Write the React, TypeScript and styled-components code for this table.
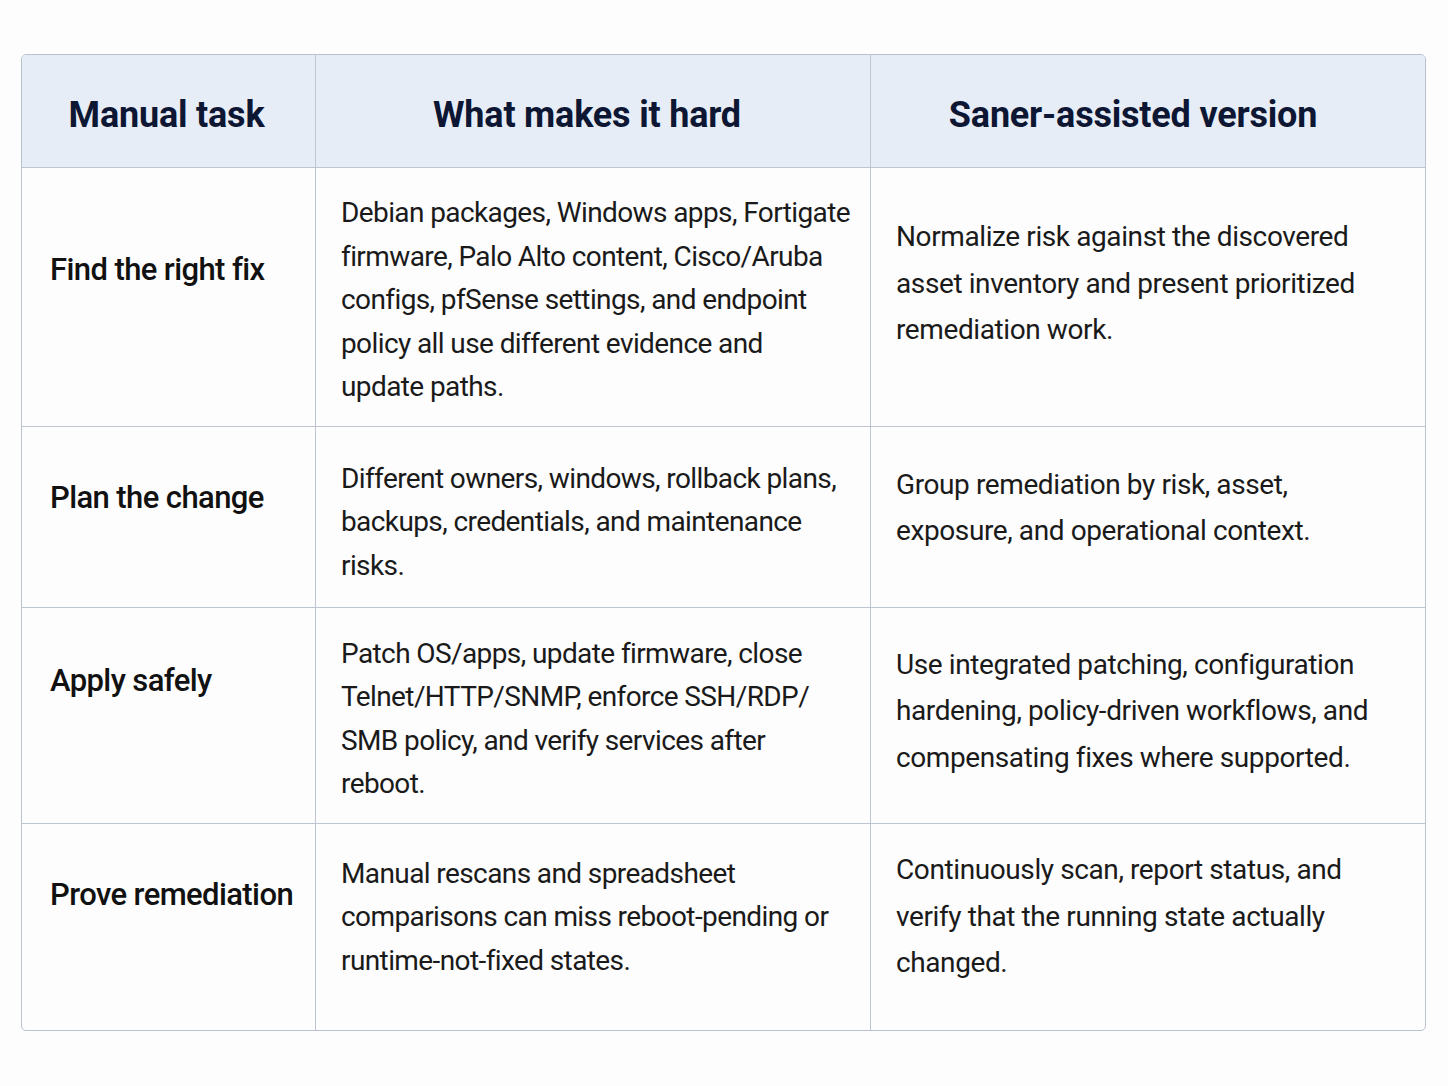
import React from "react";
import styled, { createGlobalStyle } from "styled-components";

const Global = createGlobalStyle`
  html, body { margin: 0; padding: 0; background: #ffffff; }
  body { font-family: Roboto, "Liberation Sans", sans-serif; }
`;

const Page = styled.div`
  width: 1448px;
  height: 1086px;
  padding: 54px 22px 0 21px;
  box-sizing: border-box;
  background: #fdfdfd;
`;

const Table = styled.div`
  display: grid;
  grid-template-columns: 294px 555px 1fr;
  grid-template-rows: 113px 259px 181px 216px 206px;
  width: 1405px;
  box-sizing: border-box;
  border: 1.5px solid #b9c2ce;
  border-radius: 5px;
  overflow: hidden;
`;

const Cell = styled.div<{ $last?: boolean; $bottom?: boolean }>`
  box-sizing: border-box;
  border-right: ${(p) => (p.$last ? "none" : "1.5px solid #bcc5d0")};
  border-bottom: ${(p) => (p.$bottom ? "none" : "1.5px solid #bcc5d0")};
  display: flex;
  align-items: center;
`;

const HeaderCell = styled(Cell)<{ $nudge: number }>`
  background: #e7edf6;
  justify-content: center;
  font-family: Roboto, "Liberation Sans", sans-serif;
  font-weight: 700;
  font-size: 36px;
  letter-spacing: -0.2px;
  color: #0d1633;
  padding-top: 8px;
  span { transform: translateX(${(p) => p.$nudge}px); }
`;

const LabelCell = styled(Cell)<{ $shift: number }>`
  padding: 0 20px 0 28px;
  font-weight: 500;
  font-size: 31px;
  letter-spacing: -0.6px;
  color: #111111;
  span { transform: translateY(${(p) => p.$shift}px); }
`;

const TextCell = styled(Cell)<{ $shift: number; $lh: number; $ls: number }>`
  padding: 0 8px 0 25px;
  font-size: 28px;
  line-height: ${(p) => p.$lh}px;
  letter-spacing: ${(p) => p.$ls}px;
  color: #1a1a1a;
  overflow: hidden;
`;

const Lines = styled.div<{ $shift: number }>`
  display: flex;
  flex-direction: column;
  transform: translateY(${(p) => p.$shift}px);
`;

const Line = styled.span`
  white-space: nowrap;
`;

type Row = {
  label: string;
  hard: string[];
  saner: string[];
  labelShift: number;
  hardShift: number;
  sanerShift: number;
};

const rows: Row[] = [
  {
    label: "Find the right fix",
    hard: [
      "Debian packages, Windows apps, Fortigate",
      "firmware, Palo Alto content, Cisco/Aruba",
      "configs, pfSense settings, and endpoint",
      "policy all use different evidence and",
      "update paths.",
    ],
    saner: [
      "Normalize risk against the discovered",
      "asset inventory and present prioritized",
      "remediation work.",
    ],
    labelShift: -28,
    hardShift: 3,
    sanerShift: -13,
  },
  {
    label: "Plan the change",
    hard: [
      "Different owners, windows, rollback plans,",
      "backups, credentials, and maintenance",
      "risks.",
    ],
    saner: ["Group remediation by risk, asset,", "exposure, and operational context."],
    labelShift: -20,
    hardShift: 5,
    sanerShift: -9,
  },
  {
    label: "Apply safely",
    hard: [
      "Patch OS/apps, update firmware, close",
      "Telnet/HTTP/SNMP, enforce SSH/RDP/",
      "SMB policy, and verify services after",
      "reboot.",
    ],
    saner: [
      "Use integrated patching, configuration",
      "hardening, policy-driven workflows, and",
      "compensating fixes where supported.",
    ],
    labelShift: -35,
    hardShift: 3,
    sanerShift: -4,
  },
  {
    label: "Prove remediation",
    hard: [
      "Manual rescans and spreadsheet",
      "comparisons can miss reboot-pending or",
      "runtime-not-fixed states.",
    ],
    saner: [
      "Continuously scan, report status, and",
      "verify that the running state actually",
      "changed.",
    ],
    labelShift: -33,
    hardShift: -10,
    sanerShift: -10,
  },
];

export default function App() {
  return (
    <Page>
      <Global />
      <Table>
        <HeaderCell $nudge={-2}>
          <span>Manual task</span>
        </HeaderCell>
        <HeaderCell $nudge={-6}>
          <span>What makes it hard</span>
        </HeaderCell>
        <HeaderCell $last $nudge={-15}>
          <span>Saner-assisted version</span>
        </HeaderCell>
        {rows.map((r, i) => {
          const bottom = i === rows.length - 1;
          return (
            <React.Fragment key={r.label}>
              <LabelCell $bottom={bottom} $shift={r.labelShift}>
                <span>{r.label}</span>
              </LabelCell>
              <TextCell $bottom={bottom} $shift={r.hardShift} $lh={43.5} $ls={-0.6}>
                <Lines $shift={r.hardShift}>
                  {r.hard.map((l) => (
                    <Line key={l}>{l}</Line>
                  ))}
                </Lines>
              </TextCell>
              <TextCell $bottom={bottom} $last $shift={r.sanerShift} $lh={46.5} $ls={-0.4}>
                <Lines $shift={r.sanerShift}>
                  {r.saner.map((l) => (
                    <Line key={l}>{l}</Line>
                  ))}
                </Lines>
              </TextCell>
            </React.Fragment>
          );
        })}
      </Table>
    </Page>
  );
}
